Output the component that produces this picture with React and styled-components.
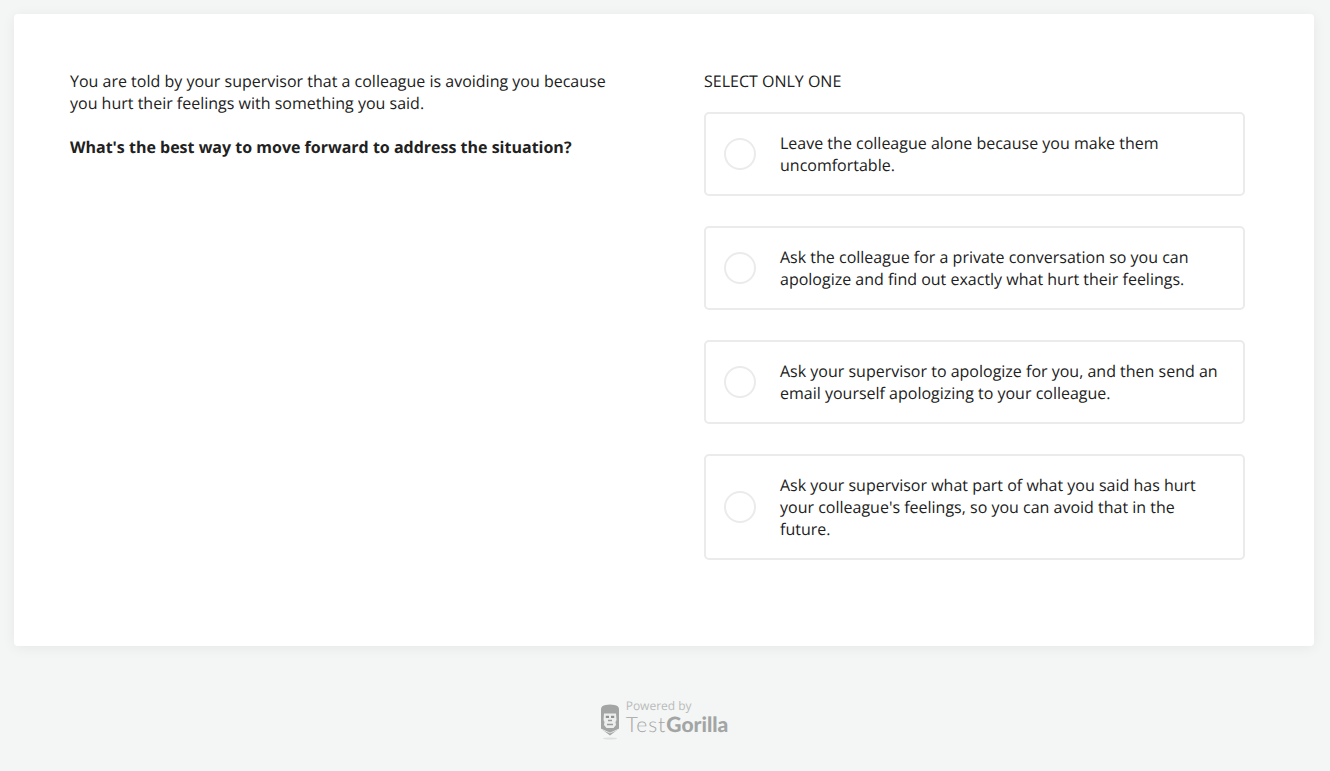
import React from 'react'
import styled, { createGlobalStyle } from 'styled-components'

const GlobalStyle = createGlobalStyle`
  html, body {
    margin: 0;
    padding: 0;
    background: #f4f6f5;
  }
  body {
    font-family: "Open Sans", "Liberation Sans", sans-serif;
    color: #212121;
    text-rendering: geometricPrecision;
  }
`

const options = [
  { id: 1, label: 'Leave the colleague alone because you make them uncomfortable.' },
  { id: 2, label: 'Ask the colleague for a private conversation so you can apologize and find out exactly what hurt their feelings.' },
  { id: 3, label: 'Ask your supervisor to apologize for you, and then send an email yourself apologizing to your colleague.' },
  { id: 4, label: "Ask your supervisor what part of what you said has hurt your colleague's feelings, so you can avoid that in the future." },
]

const GorillaLogo = () => (
  <LogoMark viewBox="0 0 20 36" width="20" height="36">
    {/* pencil shaped head */}
    <path
      d="M1 5 C1 2.5 3 1.5 5.500 1 L10 .5 L14.500 1 C17 1.500 19 2.500 19 5 L19 24.500 L10 31.500 L1 24.500 Z"
      fill="#a3a5a4"
    />
    {/* face */}
    <path
      d="M4 9.500 L16 9.500 L16.500 16 L15.500 18 L16 21 L13.500 24 L6.500 24 L4 21 L4.500 18 L3.500 16 Z"
      fill="#eceeed"
    />
    <path d="M5.800 11.800 L9 11.800 L9 14 L5.800 14 Z M11 11.800 L14.200 11.800 L14.200 14 L11 14 Z" fill="#8f9190" />
    <path d="M8 16.500 L12 16.500 M7 20.500 L13 20.500" stroke="#9a9c9b" strokeWidth="1.400" />
    {/* pencil tip line */}
    <path d="M2 25.500 L10 29 L18 25.500" fill="none" stroke="#e2e4e3" strokeWidth="1" />
    <ellipse cx="10" cy="34.500" rx="7" ry="1" fill="#dfe1e0" />
  </LogoMark>
)

const App = () => {
  return (
    <Page>
      <GlobalStyle />
      <Card>
        <Question>
          <p>You are told by your supervisor that a colleague is avoiding you because you hurt their feelings with something you said.</p>
          <p><strong>What's the best way to move forward to address the situation?</strong></p>
        </Question>
        <Answers>
          <Hint>SELECT ONLY ONE</Hint>
          <OptionList>
            {options.map(item => (
              <Option key={item.id}>
                <Radio />
                <OptionText>{item.label}</OptionText>
              </Option>
            ))}
          </OptionList>
        </Answers>
      </Card>
      <Footer>
        <GorillaLogo />
        <Brand>
          <Powered>Powered by</Powered>
          <BrandName>Test<b>Gorilla</b></BrandName>
        </Brand>
      </Footer>
    </Page>
  )
}

const Page = styled.div`
  min-height: 771px;
  box-sizing: border-box;
  padding: 14px 16px 0 14px;
`

const Card = styled.section`
  display: grid;
  grid-template-columns: 541px 541px;
  column-gap: 93px;
  box-sizing: border-box;
  width: 1300px;
  height: 632px;
  padding: 56px 69px 0 56px;
  background: #fff;
  border-radius: 4px;
  box-shadow: 0 2px 14px rgba(0, 0, 0, 0.06);
`

const Question = styled.div`
  font-size: 16px;
  line-height: 22px;
  p {
    margin: 0 0 22px;
  }
  strong {
    font-weight: 700;
  }
`

const Answers = styled.div`
  display: flex;
  flex-direction: column;
`

const Hint = styled.div`
  font-size: 16px;
  line-height: 22px;
  margin-bottom: 20px;
`

const OptionList = styled.div`
  display: flex;
  flex-direction: column;
  gap: 30px;
`

const Option = styled.div`
  display: flex;
  align-items: center;
  box-sizing: border-box;
  padding: 18px;
  background: #fff;
  border: 2px solid #ebebeb;
  border-radius: 5px;
`

const Radio = styled.span`
  flex: none;
  box-sizing: border-box;
  width: 32px;
  height: 32px;
  margin-right: 24px;
  border: 2px solid #ebebeb;
  border-radius: 50%;
`

const OptionText = styled.div`
  font-size: 16px;
  line-height: 22px;
`

const Footer = styled.footer`
  display: flex;
  justify-content: center;
  align-items: flex-start;
  gap: 6px;
  margin-top: 53px;
`

const LogoMark = styled.svg`
  display: block;
  margin-top: 5px;
`

const Brand = styled.div`
  display: flex;
  flex-direction: column;
`

const Powered = styled.div`
  font-size: 12px;
  line-height: 14px;
  color: #b9bbba;
`

const BrandName = styled.div`
  font-family: Lato, "Liberation Sans", sans-serif;
  font-size: 21px;
  line-height: 24px;
  font-weight: 300;
  letter-spacing: 1px;
  color: #a3a5a4;
  b {
    font-weight: 900;
    letter-spacing: 0;
    color: #a3a5a4;
  }
`

export default App
